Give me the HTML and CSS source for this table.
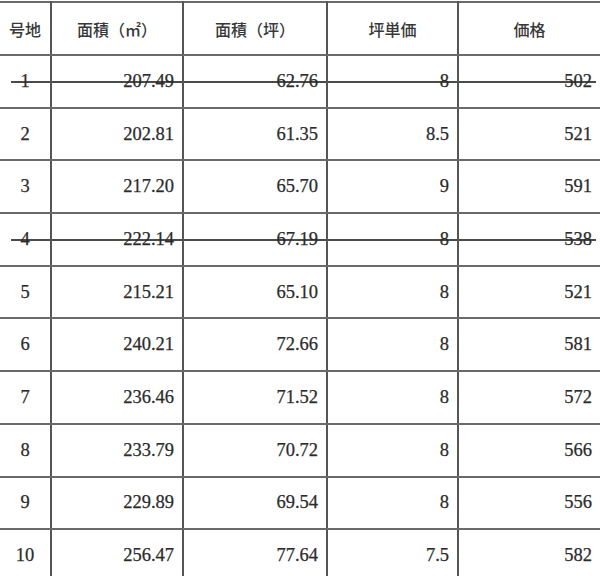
FILE: index.html
```html
<!DOCTYPE html>
<html lang="ja">
<head>
<meta charset="utf-8">
<title>号地一覧</title>
<link rel="stylesheet" href="styles.css">
</head>
<body>
<table class="lots">
  <colgroup>
    <col class="c-no"><col class="c-m2"><col class="c-tsubo"><col class="c-unit"><col class="c-price">
  </colgroup>
  <thead>
    <tr class="head">
      <th>号地</th><th>面積（㎡）</th><th>面積（坪）</th><th>坪単価</th><th>価格</th>
    </tr>
  </thead>
  <tbody>
    <tr class="struck"><td class="no">1</td><td class="num">207.49</td><td class="num">62.76</td><td class="num">8</td><td class="num">502</td></tr>
    <tr><td class="no">2</td><td class="num">202.81</td><td class="num">61.35</td><td class="num">8.5</td><td class="num">521</td></tr>
    <tr><td class="no">3</td><td class="num">217.20</td><td class="num">65.70</td><td class="num">9</td><td class="num">591</td></tr>
    <tr class="struck"><td class="no">4</td><td class="num">222.14</td><td class="num">67.19</td><td class="num">8</td><td class="num">538</td></tr>
    <tr><td class="no">5</td><td class="num">215.21</td><td class="num">65.10</td><td class="num">8</td><td class="num">521</td></tr>
    <tr><td class="no">6</td><td class="num">240.21</td><td class="num">72.66</td><td class="num">8</td><td class="num">581</td></tr>
    <tr><td class="no">7</td><td class="num">236.46</td><td class="num">71.52</td><td class="num">8</td><td class="num">572</td></tr>
    <tr><td class="no">8</td><td class="num">233.79</td><td class="num">70.72</td><td class="num">8</td><td class="num">566</td></tr>
    <tr><td class="no">9</td><td class="num">229.89</td><td class="num">69.54</td><td class="num">8</td><td class="num">556</td></tr>
    <tr><td class="no">10</td><td class="num">256.47</td><td class="num">77.64</td><td class="num">7.5</td><td class="num">582</td></tr>
  </tbody>
</table>
</body>
</html>
```

FILE: styles.css
```css
html, body {
  margin: 0;
  padding: 0;
  background: #ffffff;
}

body {
  padding-top: 1px;
}

.lots {
  width: 600px;
  table-layout: fixed;
  border-collapse: collapse;
  font-family: "Liberation Serif", "Noto Sans CJK JP", serif;
  color: #2b2b2b;
}

.c-no { width: 51px; }
.c-m2 { width: 132px; }
.c-tsubo { width: 144px; }
.c-unit { width: 131px; }
.c-price { width: 142px; }

.lots th,
.lots td {
  border-top: 2px solid #6a6a6a;
  border-bottom: 2px solid #6a6a6a;
  border-left: 2px solid #555555;
  border-right: 2px solid #555555;
  padding: 0;
  vertical-align: middle;
}

.lots tr > :first-child { border-left: none; }
.lots tr > :last-child { border-right: none; }

.head {
  height: 53px;
}

.head th {
  font-family: "Noto Sans CJK JP", sans-serif;
  font-weight: 500;
  font-size: 16px;
  color: #383838;
  text-align: center;
}

.lots tbody tr {
  height: 52.7px;
}

.lots td {
  font-size: 18.5px;
  -webkit-text-stroke: 0.25px #2b2b2b;
}

.no {
  text-align: center;
}

.num {
  text-align: right;
  padding-right: 8px !important;
}

.struck td {
  background-image: linear-gradient(to bottom,
    transparent calc(50% - 0.5px),
    #4a4a4a calc(50% - 0.5px),
    #4a4a4a calc(50% + 1.5px),
    transparent calc(50% + 1.5px));
  background-repeat: no-repeat;
  background-size: 100% 100%;
}

.struck td.no {
  background-size: calc(100% - 11px) 100%;
  background-position: right top;
}

.struck td:last-child {
  background-size: calc(100% - 4px) 100%;
  background-position: left top;
}
```
